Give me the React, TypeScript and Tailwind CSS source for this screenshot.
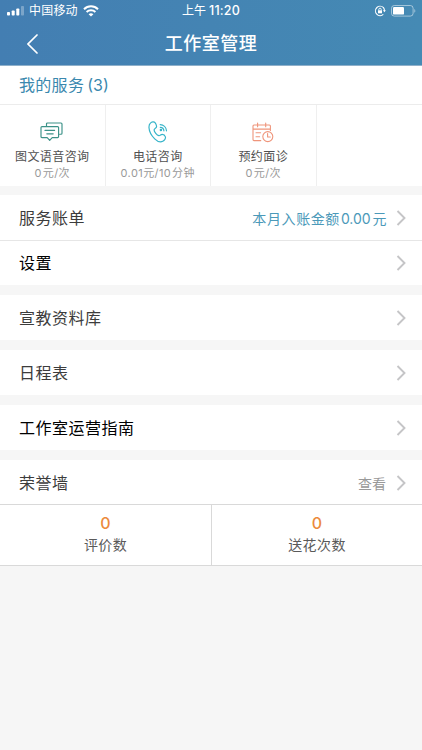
import React from 'react';

interface Service {
  name: string;
  price: React.ReactNode;
  icon: React.ReactNode;
}

interface MenuRowProps {
  label: string;
  extra?: React.ReactNode;
  strong?: boolean;
  className?: string;
}

const ChatIcon = () => (
  <svg width="24" height="20" viewBox="0 0 24 20" fill="none" stroke="#3c9288" strokeWidth="1.15" strokeLinejoin="round" strokeLinecap="round">
    <path d="M6.5 4V2Q6.5 1 7.5 1H21Q22 1 22 2V11.2Q22 12.2 21 12.2H19.6" />
    <path d="M2 4.6H17.6Q18.6 4.6 18.6 5.6V14.6Q18.6 15.6 17.6 15.6H12.2L9.7 18.3L7.2 15.6H2Q1 15.6 1 14.6V5.6Q1 4.6 2 4.6Z" />
    <path d="M5 8.4H14.6M6.8 11.8H13.2" />
  </svg>
);

const PhoneIcon = () => (
  <svg width="20" height="22" viewBox="0 0 20 22" fill="none" stroke="#36b4c9" strokeWidth="1.2" strokeLinejoin="round" strokeLinecap="round">
    <path d="M2.4 2.1C3.7.8 6 .4 7 1.6C8 2.9 8.8 4.6 8.5 5.8C8.2 7.2 6.1 7.7 6.1 9C6.1 10.9 8.9 14.3 10.8 14.7C12.2 15 12.8 13.2 14.2 13.3C15.5 13.4 17 14.7 17.4 15.9C17.8 17.4 16.4 19.5 14.8 20.3C12.5 21.4 9.3 20.4 6.7 17.8C3.8 14.9 1.2 10.4 1 6.7C.9 4.8 1.2 3.2 2.4 2.1Z" />
    <path d="M12.2 3.6C15.5 3.7 18.2 6.2 18.5 9.8M12.3 6.3C14.1 6.4 15.7 7.9 15.9 9.8" />
    <circle cx="12.9" cy="9.1" r=".65" fill="#36b4c9" />
  </svg>
);

const CalendarIcon = () => (
  <svg width="22" height="21" viewBox="0 0 22 21" fill="none" stroke="#ef957b" strokeWidth="1.1" strokeLinejoin="round" strokeLinecap="round">
    <path d="M8.8 18.6H2Q1 18.6 1 17.6V4Q1 3 2 3H17.4Q18.4 3 18.4 4V8.5M1 7.1H18.4M5.6 1V4.8M13.7 1V4.8" />
    <path d="M4 10.8H8.6M4 14.7H7.6" />
    <circle cx="15.8" cy="14.6" r="5" />
    <path d="M15.6 11.6V15H18.3" />
  </svg>
);

const services: Service[] = [
  { name: '图文语音咨询', price: <>0<span className="ml-px">元/次</span></>, icon: <ChatIcon /> },
  { name: '电话咨询', price: <>0.01元/10<span className="ml-px">分钟</span></>, icon: <PhoneIcon /> },
  { name: '预约面诊', price: <>0<span className="ml-px">元/次</span></>, icon: <CalendarIcon /> },
];

const stats = [
  { label: '评价数', value: 0 },
  { label: '送花次数', value: 0 },
];

function MenuRow({ label, extra, strong, className = '' }: MenuRowProps) {
  return (
    <button className={`flex h-[45px] w-full items-center bg-white pr-4 pl-[19px] ${className}`}>
      <span className={`text-[16px] tracking-[0.5px] ${strong ? 'text-black' : 'text-[#3c3c3c]'}`}>
        {label}
      </span>
      <span className="mr-[9px] ml-auto">{extra}</span>
      <svg width="10" height="16" viewBox="0 0 10 16" fill="none" stroke="#c5c5c7" strokeWidth="1.9">
        <path d="M1.5 1L8.5 8L1.5 15" />
      </svg>
    </button>
  );
}

function StatusBar() {
  return (
    <div className="flex h-[22px] items-center pr-[6px] pl-[7px] text-white">
      <svg width="18" height="10" viewBox="0 0 18 10" fill="currentColor">
        <rect x="0" y="6" width="3" height="3.5" rx=".8" />
        <rect x="4.7" y="4.4" width="3" height="5.1" rx=".8" />
        <rect x="9.3" y="2.4" width="3" height="7.1" rx=".8" />
        <rect x="14" y="0" width="3" height="9.5" rx=".8" opacity=".3" />
      </svg>
      <span className="ml-[4px] w-[50px] text-[12px] tracking-[0.2px] whitespace-nowrap">中国移动</span>
      <svg className="ml-[4px]" width="16" height="12" viewBox="0 0 16 12" fill="none" stroke="currentColor" strokeWidth="2">
        <path d="M1 4.2C4.9.4 11.1.4 15 4.2M3.6 7C6 4.7 10 4.7 12.4 7" />
        <path d="M8 11.6L5.6 9.2C7 8 9 8 10.4 9.2Z" fill="currentColor" stroke="none" />
      </svg>
      <span className="ml-[83px] flex items-center gap-[3px] text-[12px] whitespace-nowrap">
        上午<b className="text-[12.5px] font-medium tracking-[0.2px]">11:20</b>
      </span>
      <svg className="ml-auto" width="12" height="12" viewBox="0 0 12 12" fill="none" stroke="currentColor" strokeWidth="1.1">
        <path d="M9.5 2.6A4.7 4.7 0 1 0 9.3 9.4M9.5 2.6A4.7 4.7 0 0 1 10.4 6" />
        <path d="M9 5.2H11.9L10.4 7.2Z" fill="currentColor" stroke="none" />
        <rect x="4" y="5.3" width="4" height="3" fill="currentColor" stroke="none" />
        <path d="M4.8 5.4V4.4A1.2 1.2 0 0 1 7.2 4.4V5.4" strokeWidth=".9" />
      </svg>
      <svg className="ml-[5px]" width="25" height="12" viewBox="0 0 25 12" fill="none">
        <rect x=".5" y=".5" width="21.6" height="10.6" rx="2.8" stroke="currentColor" opacity=".5" />
        <rect x="2" y="2" width="11" height="7.6" rx="1.2" fill="currentColor" />
        <path d="M23.3 4V7.8C24.7 7.2 24.7 4.6 23.3 4Z" fill="currentColor" opacity=".5" />
      </svg>
    </div>
  );
}

export default function App() {
  return (
    <div className="min-h-screen bg-[#f6f6f6] font-['Inter','Noto_Sans_CJK_SC',sans-serif]">
      {/* Header */}
      <header className="h-[66px] border-b border-[#8fb0ca] bg-linear-to-r from-[#437eb2] to-[#458ab4]">
        <StatusBar />
        <div className="flex h-[43px] items-center pl-[27px] text-white">
          <svg width="11" height="20" viewBox="0 0 11 20" fill="none" stroke="currentColor" strokeWidth="1.7" strokeLinecap="round">
            <path d="M10 1L1 10L10 19" />
          </svg>
          <h1 className="flex-1 pr-[38px] text-center text-[18px] font-medium tracking-[0.5px]">工作室管理</h1>
        </div>
      </header>

      {/* Services */}
      <section className="h-[120px] bg-white">
        <h2 className="flex h-[39px] items-center gap-[3px] border-b border-[#ececec] pl-[19px] text-[16px] text-[#3a88ae]">
          <span className="tracking-[0.3px]">我的服务</span>
          <span>(3)</span>
        </h2>
        <div className="grid h-[81px] grid-cols-4">
          {services.map((service) => (
            <div key={service.name} className="flex flex-col items-center border-r border-[#efefef] pt-[16px]">
              <div className="flex h-[22px] items-center">{service.icon}</div>
              <p className="mt-[5px] text-[12px] leading-[18px] tracking-[0.4px] whitespace-nowrap text-[#505050]">{service.name}</p>
              <p className="text-[11px] leading-[14px] tracking-[0.4px] whitespace-nowrap text-[#999]">{service.price}</p>
            </div>
          ))}
        </div>
      </section>

      {/* Menu */}
      <nav className="mt-[9px]">
        <MenuRow
          label="服务账单"
          extra={
            <span className="text-[14px] tracking-[0.6px] text-[#4b99b9]">
              本月入账金额<span className="mr-[2px] ml-px tracking-[-0.1px]">0.00</span>元
            </span>
          }
        />
        <MenuRow label="设置" strong className="border-t border-[#e6e6e6]" />
        <MenuRow label="宣教资料库" className="mt-[10px]" />
        <MenuRow label="日程表" className="mt-[10px]" />
        <MenuRow label="工作室运营指南" strong className="mt-[10px]" />
        <MenuRow
          label="荣誉墙"
          className="mt-[10px]"
          extra={<span className="mr-px text-[14px] text-[#999]">查看</span>}
        />
      </nav>

      {/* Stats */}
      <section className="-mt-px grid h-[62px] grid-cols-2 border-y border-[#d9d9d9] bg-white">
        {stats.map((stat) => (
          <div key={stat.label} className="flex flex-col items-center border-[#d9d9d9] pt-[7px] even:border-l">
            <span className="text-[16px] leading-[22px] font-medium text-[#ec8a3c]">{stat.value}</span>
            <span className="text-[14px] leading-[22px] tracking-[0.4px] text-[#5a5a5a]">{stat.label}</span>
          </div>
        ))}
      </section>
    </div>
  );
}
